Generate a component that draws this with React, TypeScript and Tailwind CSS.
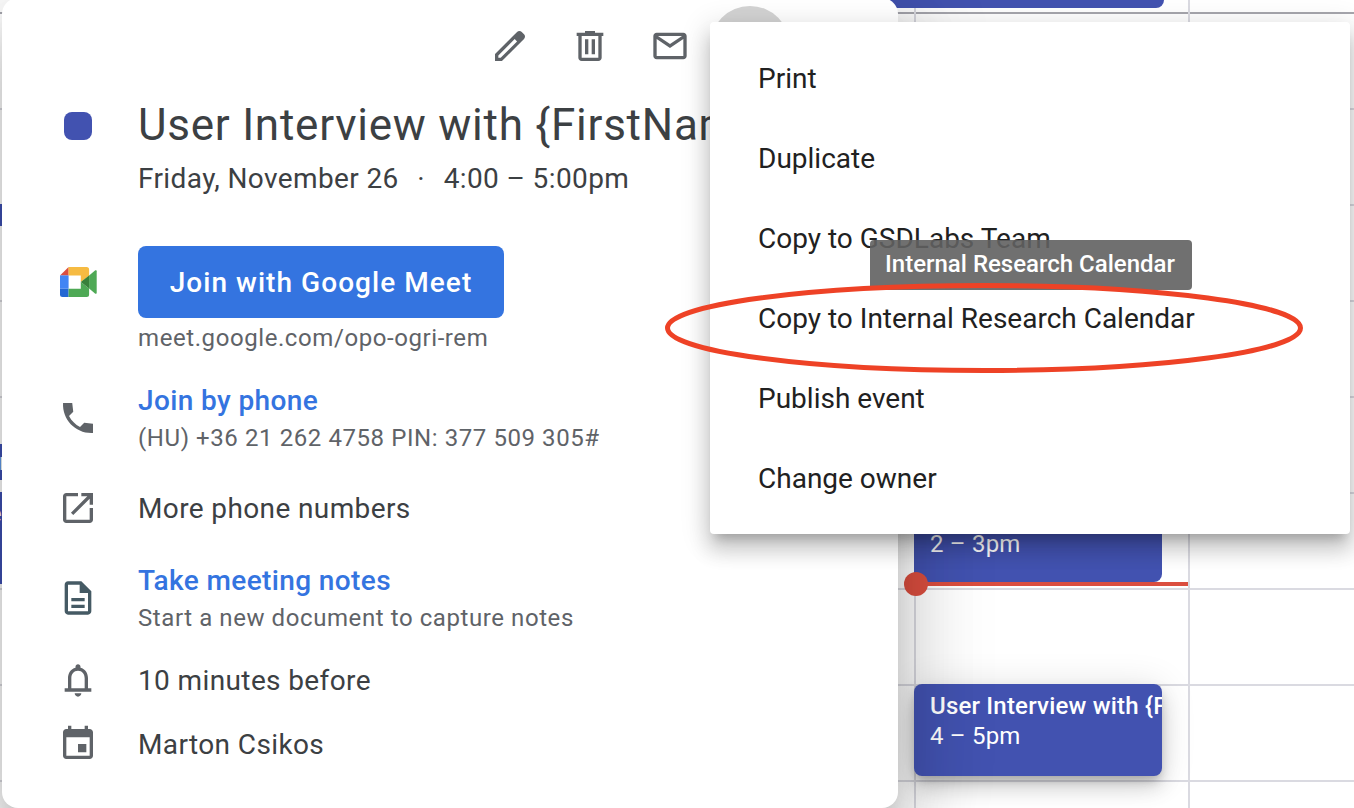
import type { ReactNode } from 'react';

const icons = {
  edit: 'M20.41 4.94l-1.35-1.35c-.78-.78-2.05-.78-2.83 0L3 16.82V21h4.18L20.41 7.77c.79-.78.79-2.05 0-2.83zm-14 14.12L5 19v-1.36l9.82-9.82 1.41 1.41-9.82 9.83z',
  trash: 'M15 4V3H9v1H4v2h1v13c0 1.1.9 2 2 2h10c1.1 0 2-.9 2-2V6h1V4h-5zm2 15H7V6h10v13zM9 8h2v9H9zm4 0h2v9h-2z',
  mail: 'M20 4H4c-1.1 0-2 .9-2 2v12c0 1.1.9 2 2 2h16c1.1 0 2-.9 2-2V6c0-1.1-.9-2-2-2zm-.8 2L12 10.8 4.8 6h14.4zM4 18V7.87l8 5.33 8-5.33V18H4z',
  phone: 'M21 15.46l-5.27-.61-2.52 2.52c-2.83-1.44-5.15-3.75-6.59-6.59l2.53-2.53L8.54 3H3.03C2.45 13.18 10.82 21.55 21 20.97v-5.51z',
  open: 'M19 19H5V5h7V3H5c-1.11 0-2 .9-2 2v14c0 1.1.89 2 2 2h14c1.1 0 2-.9 2-2v-7h-2v7zM14 3v2h3.59l-9.83 9.83 1.41 1.41L19 6.41V10h2V3h-7z',
  doc: 'M8 16h8v2H8zm0-4h8v2H8zm6-10H6c-1.1 0-2 .9-2 2v16c0 1.1.89 2 1.99 2H18c1.1 0 2-.9 2-2V8l-6-6zm4 18H6V4h7v5h5v11z',
  bell: 'M18 17v-6c0-3.07-1.63-5.64-4.5-6.32V4c0-.83-.67-1.5-1.5-1.5s-1.5.67-1.5 1.5v.68C7.64 5.36 6 7.92 6 11v6H4v2h16v-2h-2zm-2 0H8v-6c0-2.48 1.51-4.5 4-4.5s4 2.02 4 4.5v6zM12 22c1.1 0 2-.9 2-2h-4c0 1.1.9 2 2 2z',
  event: 'M17 12h-5v5h5v-5zM16 1v2H8V1H6v2H5c-1.11 0-1.99.9-1.99 2L3 19c0 1.1.89 2 2 2h14c1.1 0 2-.9 2-2V5c0-1.1-.9-2-2-2h-1V1h-2zm3 18H5V8h14v11z',
};

function Icon({ d, className = 'fill-[#5f6368]' }: { d: string; className?: string }) {
  return (
    <svg viewBox="0 0 24 24" className={`size-10 shrink-0 ${className}`}>
      <path d={d} />
    </svg>
  );
}

function MeetLogo() {
  return (
    <svg viewBox="0 0 37 30" className="h-[30px] w-[37px]">
      <path d="M0 8.4 8.6 0v8.4z" fill="#dc4f40" />
      <path d="M0 8.4h8.6v13.3H0z" fill="#4285f4" />
      <path d="M0 21.7h8.6V30H2.5A2.5 2.5 0 0 1 0 27.5z" fill="#2367d3" />
      <path d="M8.6 0h18a2.5 2.5 0 0 1 2.5 2.5v6.2L20.8 15V8.4H8.6z" fill="#f6bb42" />
      <path d="M8.6 21.7h12.2V15l8.3 6.5v6a2.5 2.5 0 0 1-2.5 2.5h-18z" fill="#4ea955" />
      <path d="M29.1 8.5 35 3.6c.8-.6 1.7-.2 1.7.7v21.4c0 .9-.9 1.3-1.7.7l-5.9-4.9z" fill="#4ea955" />
      <path d="M20.8 15l8.3-6.6v13.2z" fill="#38803a" />
    </svg>
  );
}

function Row({ icon, className = '', children }: { icon: ReactNode; className?: string; children: ReactNode }) {
  return (
    <div className={`flex items-center ${className}`}>
      <div className="flex w-[136px] shrink-0 items-center pl-14">{icon}</div>
      <div className="whitespace-nowrap">{children}</div>
    </div>
  );
}

const main = 'text-[28px] leading-10 tracking-[0.38px] text-[#3c4043]';
const sub = 'text-[24px] leading-8 tracking-[0.58px] text-[#5f6368]';
const link = 'text-[28px] leading-10 font-medium tracking-[0.38px] text-[#3474e0]';

function EventCard() {
  return (
    <section className="z-10 col-start-1 row-start-1 -mt-0.5 ml-0.5 h-[810px] w-[896px] overflow-hidden rounded-2xl bg-white pt-0.5 shadow-[0_48px_76px_6px_rgba(0,0,0,0.14),0_18px_92px_16px_rgba(0,0,0,0.12),0_22px_30px_-14px_rgba(0,0,0,0.2)]">
      <div className="flex h-[92px] items-center gap-10 pl-[488px]">
        <Icon d={icons.edit} />
        <Icon d={icons.trash} />
        <Icon d={icons.mail} />
        <div className="-ml-5 size-20 rounded-full bg-[#d3d3d3]" />
      </div>
      <div className="flex pt-[5px]">
        <div className="w-[136px] shrink-0 pt-[15px] pl-[62px]">
          <div className="size-7 rounded-lg bg-[#4252b0]" />
        </div>
        <div className="whitespace-nowrap">
          <h1 className="text-[44px] leading-14 tracking-[0.75px] text-[#3c4043]">User Interview with {'{FirstName}'}</h1>
          <p className={`mt-1.5 flex ${main}`}>
            <span>Friday, November 26</span>
            <span className="w-[45px] text-center">·</span>
            <span>4:00 – 5:00pm</span>
          </p>
        </div>
      </div>
      <div className="mt-[47px] flex">
        <div className="w-[136px] shrink-0 pt-[21px] pl-[58px]">
          <MeetLogo />
        </div>
        <div>
          <button className="block h-[72px] w-[366px] rounded-lg bg-[#3474e0] pt-0.5 text-[28px] font-medium tracking-[1.05px] whitespace-nowrap text-white">
            Join with Google Meet
          </button>
          <p className={`mt-1 ${sub}`}>meet.google.com/opo-ogri-rem</p>
        </div>
      </div>
      <Row className="mt-[26px] h-[76px]" icon={<Icon d={icons.phone} />}>
        <p className={link}>Join by phone</p>
        <p className={`mt-px mb-px ${sub}`}>(HU) +36 21 262 4758 PIN: 377 509 305#</p>
      </Row>
      <Row className="mt-8 h-10" icon={<Icon d={icons.open} />}>
        <p className={`pt-0.5 ${main}`}>More phone numbers</p>
      </Row>
      <Row className="mt-8 h-[76px]" icon={<Icon d={icons.doc} className="fill-[#455a64]" />}>
        <p className={link}>Take meeting notes</p>
        <p className={`mt-px mb-px ${sub}`}>Start a new document to capture notes</p>
      </Row>
      <Row className="mt-6 h-10" icon={<Icon d={icons.bell} />}>
        <p className={`pt-0.5 ${main}`}>10 minutes before</p>
      </Row>
      <Row className="mt-6 h-10" icon={<Icon d={icons.event} />}>
        <p className={`pt-0.5 ${main}`}>Marton Csikos</p>
      </Row>
    </section>
  );
}

function Calendar() {
  return (
    <>
      <div className="col-start-1 row-start-1 flex flex-col pt-3">
        <div className="h-24 shrink-0 border-t-2 border-[#a6a6ad]" />
        {Array.from({ length: 8 }, (_, i) => (
          <div key={i} className="h-24 shrink-0 border-t-2 border-[#dadae1]" />
        ))}
      </div>
      <div className="col-start-1 row-start-1 flex">
        <div className="flex w-[914px] shrink-0 flex-col text-[24px] leading-[30px] text-white">
          <div className="mt-[204px] h-[22px] w-40 bg-[#3f51b5]" />
          <div className="mt-[218px] h-9 w-40 bg-[#3f51b5] pt-[3px]">
            <p className="-ml-px">n</p>
          </div>
          <div className="mt-3 h-[92px] w-40 bg-[#3f51b5] pt-[7px]">
            <p className="-ml-[11px]">e</p>
          </div>
        </div>
        <div className="flex w-[276px] shrink-0 flex-col border-x-2 border-[#dadae1] text-[24px] leading-[30px] text-white">
          <div className="-ml-10 h-2 w-[288px] shrink-0 rounded-br-xl bg-[#4252b0]" />
          <div className="mt-[484px] -ml-0.5 h-[90px] w-[248px] shrink-0 rounded-lg bg-[#4252b0] px-4 pt-[37px] tracking-[0.2px]">
            2 – 3pm
          </div>
          <div className="relative z-[1] -ml-0.5 h-1 w-[274px] shrink-0 bg-[#db4e3f]">
            <div className="absolute -top-2.5 -left-2.5 size-6 rounded-full bg-[#db4e3f]" />
          </div>
          <div className="mt-[98px] -ml-0.5 h-[92px] w-[248px] shrink-0 rounded-lg bg-[#4252b0] shadow-[0_12px_20px_rgba(0,0,0,0.14),0_2px_36px_rgba(0,0,0,0.12),0_6px_10px_-2px_rgba(0,0,0,0.2)]">
            <div className="overflow-hidden pt-[7px] pl-4 whitespace-nowrap">
              <p className="font-medium tracking-[0.2px]">User Interview with {'{FirstName}'}</p>
              <p className="tracking-[0.2px]">4 – 5pm</p>
            </div>
          </div>
        </div>
      </div>
    </>
  );
}

const actions = [
  'Print',
  'Duplicate',
  'Copy to GSDLabs Team',
  'Copy to Internal Research Calendar',
  'Publish event',
  'Change owner',
];

export default function App() {
  return (
    <main className="relative grid h-[808px] w-[1354px] overflow-hidden bg-white font-['Roboto',sans-serif]">
      <Calendar />
      <EventCard />
      <ul className="absolute top-[22px] left-[710px] z-20 w-[640px] rounded bg-white py-4 shadow-[0_16px_20px_2px_rgba(0,0,0,0.14),0_6px_28px_4px_rgba(0,0,0,0.12),0_10px_10px_-6px_rgba(0,0,0,0.2)]">
        {actions.map((label) => (
          <li key={label} className="flex h-20 items-center px-12 pt-0.5 text-[28px] whitespace-nowrap text-[#212121]">
            {label}
          </li>
        ))}
      </ul>
      <div className="absolute top-[240px] left-[870px] z-30 flex h-[50px] w-[322px] items-center justify-center rounded bg-[#616161]/90 pr-0.5 pb-0.5 text-[24px] font-medium whitespace-nowrap text-white">
        Internal Research Calendar
      </div>
      <svg viewBox="0 0 640 92" className="absolute top-[282px] left-[664px] z-40 h-[92px] w-[640px]">
        <ellipse cx="320" cy="46" rx="316.5" ry="42.5" fill="none" stroke="#ee4226" strokeWidth="5" />
      </svg>
    </main>
  );
}
